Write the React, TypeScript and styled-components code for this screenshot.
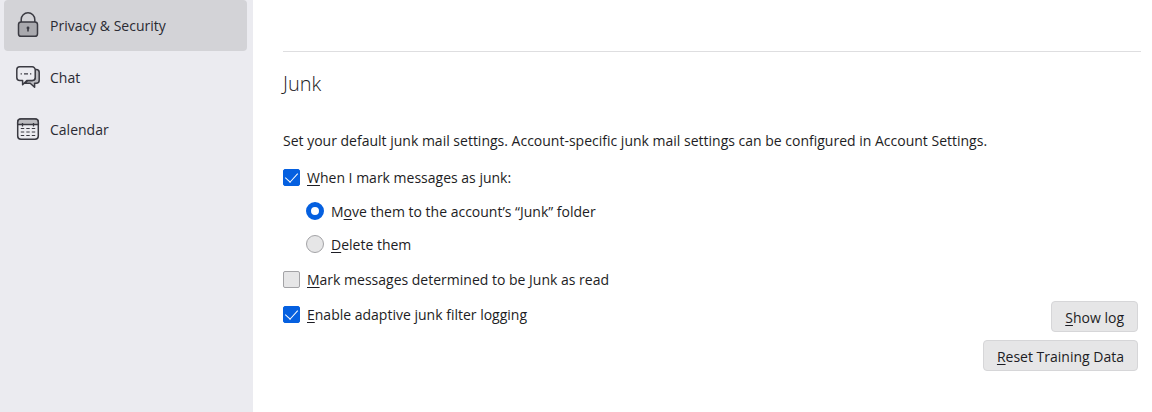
import React from "react";
import styled, { createGlobalStyle } from "styled-components";

const GlobalStyle = createGlobalStyle`
  *, *::before, *::after { box-sizing: border-box; }
  html, body { margin: 0; background: #ffffff; }
  body {
    font-family: "Segoe UI", "Open Sans", "Noto Sans", sans-serif;
    font-size: 14px;
    line-height: 22px;
    color: #1d1d24;
  }
`;

const Page = styled.div`
  display: flex;
  min-height: 100vh;
`;

const Sidebar = styled.nav`
  flex: 0 0 253px;
  display: flex;
  flex-direction: column;
  gap: 1px;
  padding: 0 6px 0 4px;
  background: #ebebf0;
`;

const Category = styled.a<{ $selected?: boolean }>`
  display: flex;
  align-items: center;
  gap: 10px;
  height: 51px;
  padding: 1px 12px 0;
  border-radius: 4px;
  color: #2a2a33;
  text-decoration: none;
  background: ${(p) => (p.$selected ? "#d3d3d7" : "transparent")};
`;

const CategoryIcon = styled.svg`
  flex: none;
  width: 24px;
  height: 28px;
  margin-top: -3px;
  fill: none;
  stroke: #3a3a42;
  stroke-width: 1.5;
  stroke-linejoin: round;
`;

const Main = styled.main`
  flex: 1;
  min-width: 0;
  padding: 51px 11px 16px 30px;
`;

const Separator = styled.hr`
  height: 1px;
  margin: 0 0 20px;
  border: 0;
  background: #dedee0;
`;

const Title = styled.h2`
  margin: 0 0 34px;
  font-size: 20px;
  line-height: 24px;
  font-weight: 300;
`;

const Description = styled.p`
  margin: 0 0 14px;
`;

const Options = styled.div`
  display: flex;
  flex-direction: column;
  gap: 11px;
`;

const RadioGroup = styled.div`
  display: flex;
  flex-direction: column;
  gap: 11px;
  padding: 1px 0 2px 23px;
`;

const Option = styled.label`
  display: flex;
  align-items: center;
  align-self: flex-start;
  gap: 7px;
`;

const OptionText = styled.span`
  padding-top: 2px;
  line-height: 20px;
`;

const Checkbox = styled.input`
  appearance: none;
  flex: none;
  display: grid;
  place-items: center;
  width: 17px;
  height: 17px;
  margin: 0;
  border: 1px solid #a3a3a6;
  border-radius: 2px;
  background: #e6e6e7;

  &:checked {
    border-color: #0560e0;
    background: #0560e0;
  }

  &:checked::before {
    content: "";
    width: 7px;
    height: 12px;
    margin-bottom: 4px;
    border: solid #ffffff;
    border-width: 0 1px 1px 0;
    transform: rotate(42deg);
  }
`;

const Radio = styled.input`
  appearance: none;
  flex: none;
  width: 18px;
  height: 18px;
  margin: 0;
  border: 1px solid #a3a3a6;
  border-radius: 50%;
  background: #e6e6e7;

  &:checked {
    border: 5px solid #0560e0;
    background: #ffffff;
  }
`;

const AccessKey = styled.span`
  text-decoration: underline;
  text-decoration-thickness: 1px;
  text-underline-offset: 2px;
`;

const LoggingRow = styled.div`
  display: flex;
  align-items: flex-start;
  justify-content: space-between;
  padding-right: 3px;
`;

const Actions = styled.div`
  display: flex;
  flex-direction: column;
  align-items: flex-end;
  gap: 8px;
`;

const Button = styled.button`
  height: 31px;
  padding: 2px 13px 0;
  border: 1px solid #d6d6d8;
  border-radius: 4px;
  background: #e6e6e7;
  color: inherit;
  font: inherit;
`;

const LoggingOption = styled(Option)`
  padding-top: 2px;
`;

const LockIcon = () => (
  <CategoryIcon viewBox="0 0 24 28" aria-hidden="true">
    <path d="M5.2 11V8.6a6.8 6.8 0 0 1 13.6 0V11" />
    <rect x="2.5" y="11" width="19" height="14.3" rx="2.6" fill="#a9a9ae" />
    <path d="M12 16.4v4" strokeWidth="1.6" />
    <circle cx="12" cy="17" r="0.7" fill="#3a3a42" />
  </CategoryIcon>
);

const ChatIcon = () => (
  <CategoryIcon viewBox="0 0 24 28" aria-hidden="true">
    <path
      d="M19 6.6h1.2a3 3 0 0 1 3 3v7.6a3 3 0 0 1-3 3h-1.6v4l-4.4-4H8.6l3-2.6H16a3 3 0 0 0 3-3z"
      fill="#bcbcc1"
    />
    <path
      d="M3.8 3.8h12.4a3 3 0 0 1 3 3v7.8a3 3 0 0 1-3 3h-5.4l-4.2 4.2v-4.2H3.8a3 3 0 0 1-3-3V6.8a3 3 0 0 1 3-3z"
      fill="#ebebf0"
    />
    <path d="M4.6 10.8h1.3M8 10.8h4M14 10.8h1.3" strokeWidth="1.2" />
  </CategoryIcon>
);

const CalendarIcon = () => (
  <CategoryIcon viewBox="0 0 24 28" aria-hidden="true">
    <rect x="1.7" y="4" width="20.6" height="20.2" rx="3.2" />
    <path d="M1.7 9.6V7.2a3.2 3.2 0 0 1 3.2-3.2h14.2a3.2 3.2 0 0 1 3.2 3.2v2.4z" fill="#bcbcc1" />
    <path d="M6.5 8v3.6M17.5 8v3.6" strokeWidth="1.3" />
    <path
      d="M4.8 13.5h3.4M10.3 13.5h3.4M15.8 13.5h3.4M4.8 17h3.4M10.3 17h3.4M15.8 17h3.4M4.8 20.5h3.4M10.3 20.5h3.4M15.8 20.5h3.4"
      strokeWidth="1.2"
    />
  </CategoryIcon>
);

export default function App() {
  return (
    <>
      <GlobalStyle />
      <Page>
        <Sidebar aria-label="Settings categories">
          <Category href="#privacy" $selected aria-current="page">
            <LockIcon />
            Privacy &amp; Security
          </Category>
          <Category href="#chat">
            <ChatIcon />
            Chat
          </Category>
          <Category href="#calendar">
            <CalendarIcon />
            Calendar
          </Category>
        </Sidebar>
        <Main>
          <Separator />
          <Title>Junk</Title>
          <Description>
            Set your default junk mail settings. Account-specific junk mail settings can be
            configured in Account Settings.
          </Description>
          <Options>
            <Option>
              <Checkbox type="checkbox" defaultChecked />
              <OptionText><AccessKey>W</AccessKey>hen I mark messages as junk:</OptionText>
            </Option>
            <RadioGroup role="radiogroup" aria-label="When I mark messages as junk">
              <Option>
                <Radio type="radio" name="junk-action" defaultChecked />
                <OptionText>M<AccessKey>o</AccessKey>ve them to the account’s “Junk” folder</OptionText>
              </Option>
              <Option>
                <Radio type="radio" name="junk-action" />
                <OptionText><AccessKey>D</AccessKey>elete them</OptionText>
              </Option>
            </RadioGroup>
            <Option>
              <Checkbox type="checkbox" />
              <OptionText><AccessKey>M</AccessKey>ark messages determined to be Junk as read</OptionText>
            </Option>
            <LoggingRow>
              <LoggingOption>
                <Checkbox type="checkbox" defaultChecked />
                <OptionText><AccessKey>E</AccessKey>nable adaptive junk filter logging</OptionText>
              </LoggingOption>
              <Actions>
                <Button type="button"><AccessKey>S</AccessKey>how log</Button>
                <Button type="button"><AccessKey>R</AccessKey>eset Training Data</Button>
              </Actions>
            </LoggingRow>
          </Options>
        </Main>
      </Page>
    </>
  );
}
